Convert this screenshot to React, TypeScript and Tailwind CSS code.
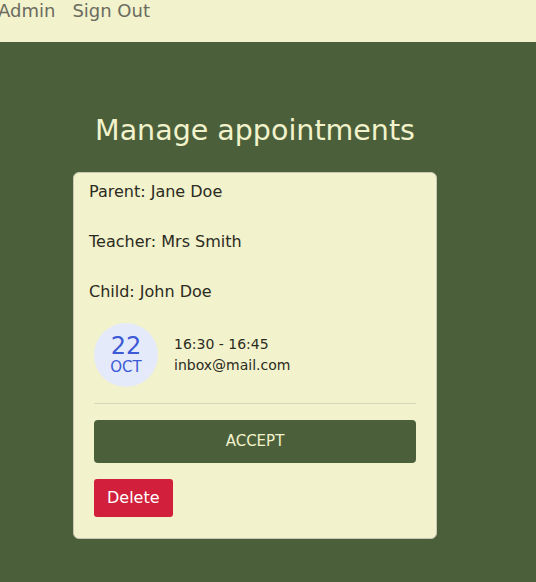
export default function App() {
  const font = { fontFamily: '"DejaVu Sans", "Open Sans", sans-serif' }
  return (
    <div className="min-h-[582px] w-[536px] bg-[#4b603a] overflow-hidden font-['DejaVu_Sans',sans-serif]" style={font}>
      {/* Top bar */}
      <div className="h-[42px] bg-[#f2f2cc] relative overflow-hidden">
        <div className="absolute left-[-2px] top-[-3px] flex gap-[17px] text-[18px] text-[#6b6b60]">
          <span>Admin</span>
          <span>Sign Out</span>
        </div>
      </div>

      <div className="flex flex-col items-center pl-[73px] pr-[99px] pt-[75px]">
        <h1 className="text-[28.5px] text-[#f2f2cc] leading-[28px] mb-[27px]">Manage appointments</h1>

        <div className="w-[364px] bg-[#f2f2cc] border border-[#c9c9b5] rounded-[6px] px-[15px] pt-[9px] pb-[21px] text-[#2b2b22]">
          <p className="text-[16px] leading-[20px]">Parent: Jane Doe</p>
          <p className="text-[16px] leading-[20px] mt-[30px]">Teacher: Mrs Smith</p>
          <p className="text-[16px] leading-[20px] mt-[30px]">Child: John Doe</p>

          <div className="mx-[5px] mt-[21px]">
            <div className="flex items-center gap-[16px]">
              <div className="w-[64px] h-[64px] rounded-full bg-[#e5eafa] flex flex-col items-center justify-center text-[#3c5ad6]">
                <span className="text-[24px] leading-[24px]">22</span>
                <span className="text-[15px] leading-[18px]">OCT</span>
              </div>
              <div className="text-[14px] leading-[21px] text-[#2b2b22]">
                <p>16:30 - 16:45</p>
                <p>inbox@mail.com</p>
              </div>
            </div>
            <div className="border-t border-[#d6d6bc] mt-[16px]" />
            <button className="w-full h-[43px] mt-[16px] bg-[#4b603a] rounded-[4px] text-[#f2f2cc] text-[15px]">ACCEPT</button>
            <button className="h-[38px] px-[13px] mt-[16px] bg-[#d21f3b] rounded-[3px] text-white text-[16px] block">Delete</button>
          </div>
        </div>
      </div>
    </div>
  )
}
